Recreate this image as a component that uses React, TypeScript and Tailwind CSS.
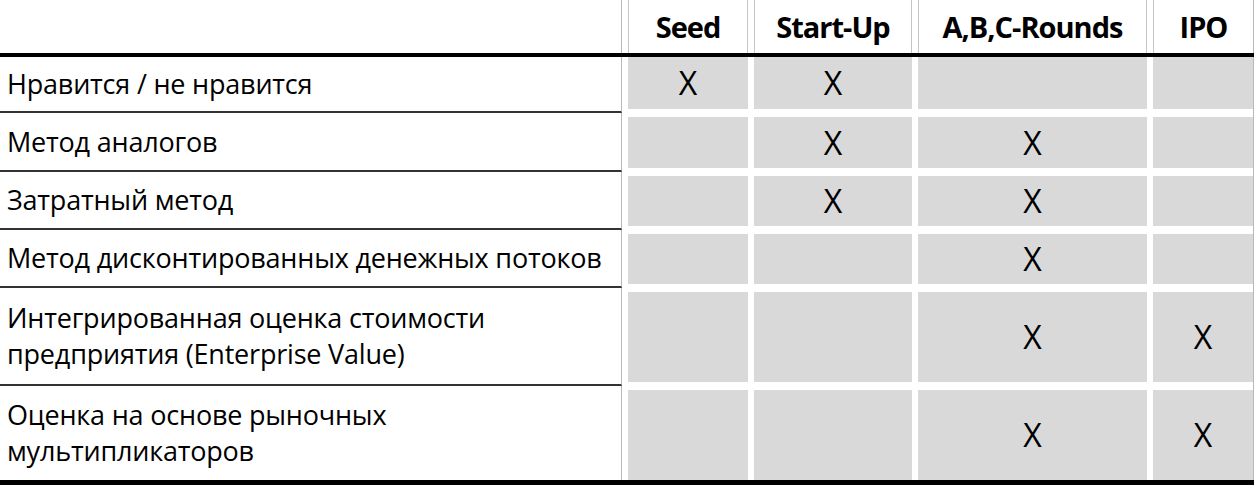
const COLUMNS = [
  { key: "seed", title: "Seed", width: "w-[120px]" },
  { key: "startup", title: "Start-Up", width: "w-[158px]" },
  { key: "rounds", title: "A,B,C-Rounds", width: "w-[229px]" },
  { key: "ipo", title: "IPO", width: "w-[101px]" },
];

const ROWS = [
  { label: ["Нравится / не нравится"], marks: [true, true, false, false], height: "h-[56px]" },
  { label: ["Метод аналогов"], marks: [false, true, true, false], height: "h-[59px]" },
  { label: ["Затратный метод"], marks: [false, true, true, false], height: "h-[58px]" },
  { label: ["Метод дисконтированных денежных потоков"], marks: [false, false, true, false], height: "h-[58px]" },
  {
    label: ["Интегрированная оценка стоимости", "предприятия (Enterprise Value)"],
    marks: [false, false, true, true],
    height: "h-[98px]",
  },
  {
    label: ["Оценка на основе рыночных", "мультипликаторов"],
    marks: [false, false, true, true],
    height: "h-[94px]",
  },
];

function HeaderRow() {
  return (
    <div className="flex h-[53px]">
      <div className="w-[622px] shrink-0 border-r border-[#b8b8b8]" />
      <div className="flex gap-[6px] pl-[6px]">
        {COLUMNS.map((col, i) => (
          <div
            key={col.key}
            className={`${col.width} flex items-center justify-center border-x border-[#c6c6c6] bg-white pb-[1px] text-[29px] font-bold leading-none tracking-[-1px] text-black ${
              i === COLUMNS.length - 1 ? "border-r-[#b8b8b8]" : ""
            }`}
          >
            {col.title}
          </div>
        ))}
      </div>
    </div>
  );
}

function BodyRow({
  label,
  marks,
  height,
  first,
  last,
}: {
  label: string[];
  marks: boolean[];
  height: string;
  first: boolean;
  last: boolean;
}) {
  return (
    <div className={`flex ${height}`}>
      <div
        className={`flex w-[622px] shrink-0 flex-col justify-center border-r border-r-[#b8b8b8] pl-[7px] text-[27px] leading-[36px] tracking-[-0.2px] text-black ${
          last ? "" : "border-b-2 border-b-[#333333]"
        }`}
      >
        {label.map((line) => (
          <span key={line} className="whitespace-nowrap">
            {line}
          </span>
        ))}
      </div>
      <div className="flex gap-[6px] pl-[6px]">
        {COLUMNS.map((col, i) => (
          <div
            key={col.key}
            className={`${col.width} flex ${first ? "pt-0" : "pt-[4px]"} ${last ? "pb-0" : "pb-[4px]"} ${
              i === COLUMNS.length - 1 ? "border-r border-[#b8b8b8]" : ""
            }`}
          >
            <div className="flex flex-1 items-center justify-center bg-[#d9d9d9] text-[32px] leading-none text-black">
              {marks[i] ? "X" : ""}
            </div>
          </div>
        ))}
      </div>
    </div>
  );
}

export default function App() {
  return (
    <div className="h-[485px] w-[1254px] overflow-hidden bg-white font-['Open_Sans',sans-serif]">
      <HeaderRow />
      <div className="h-[4px] bg-black" />
      {ROWS.map((row, i) => (
        <BodyRow
          key={row.label[0]}
          label={row.label}
          marks={row.marks}
          height={row.height}
          first={i === 0}
          last={i === ROWS.length - 1}
        />
      ))}
      <div className="h-[5px] bg-black" />
    </div>
  );
}
